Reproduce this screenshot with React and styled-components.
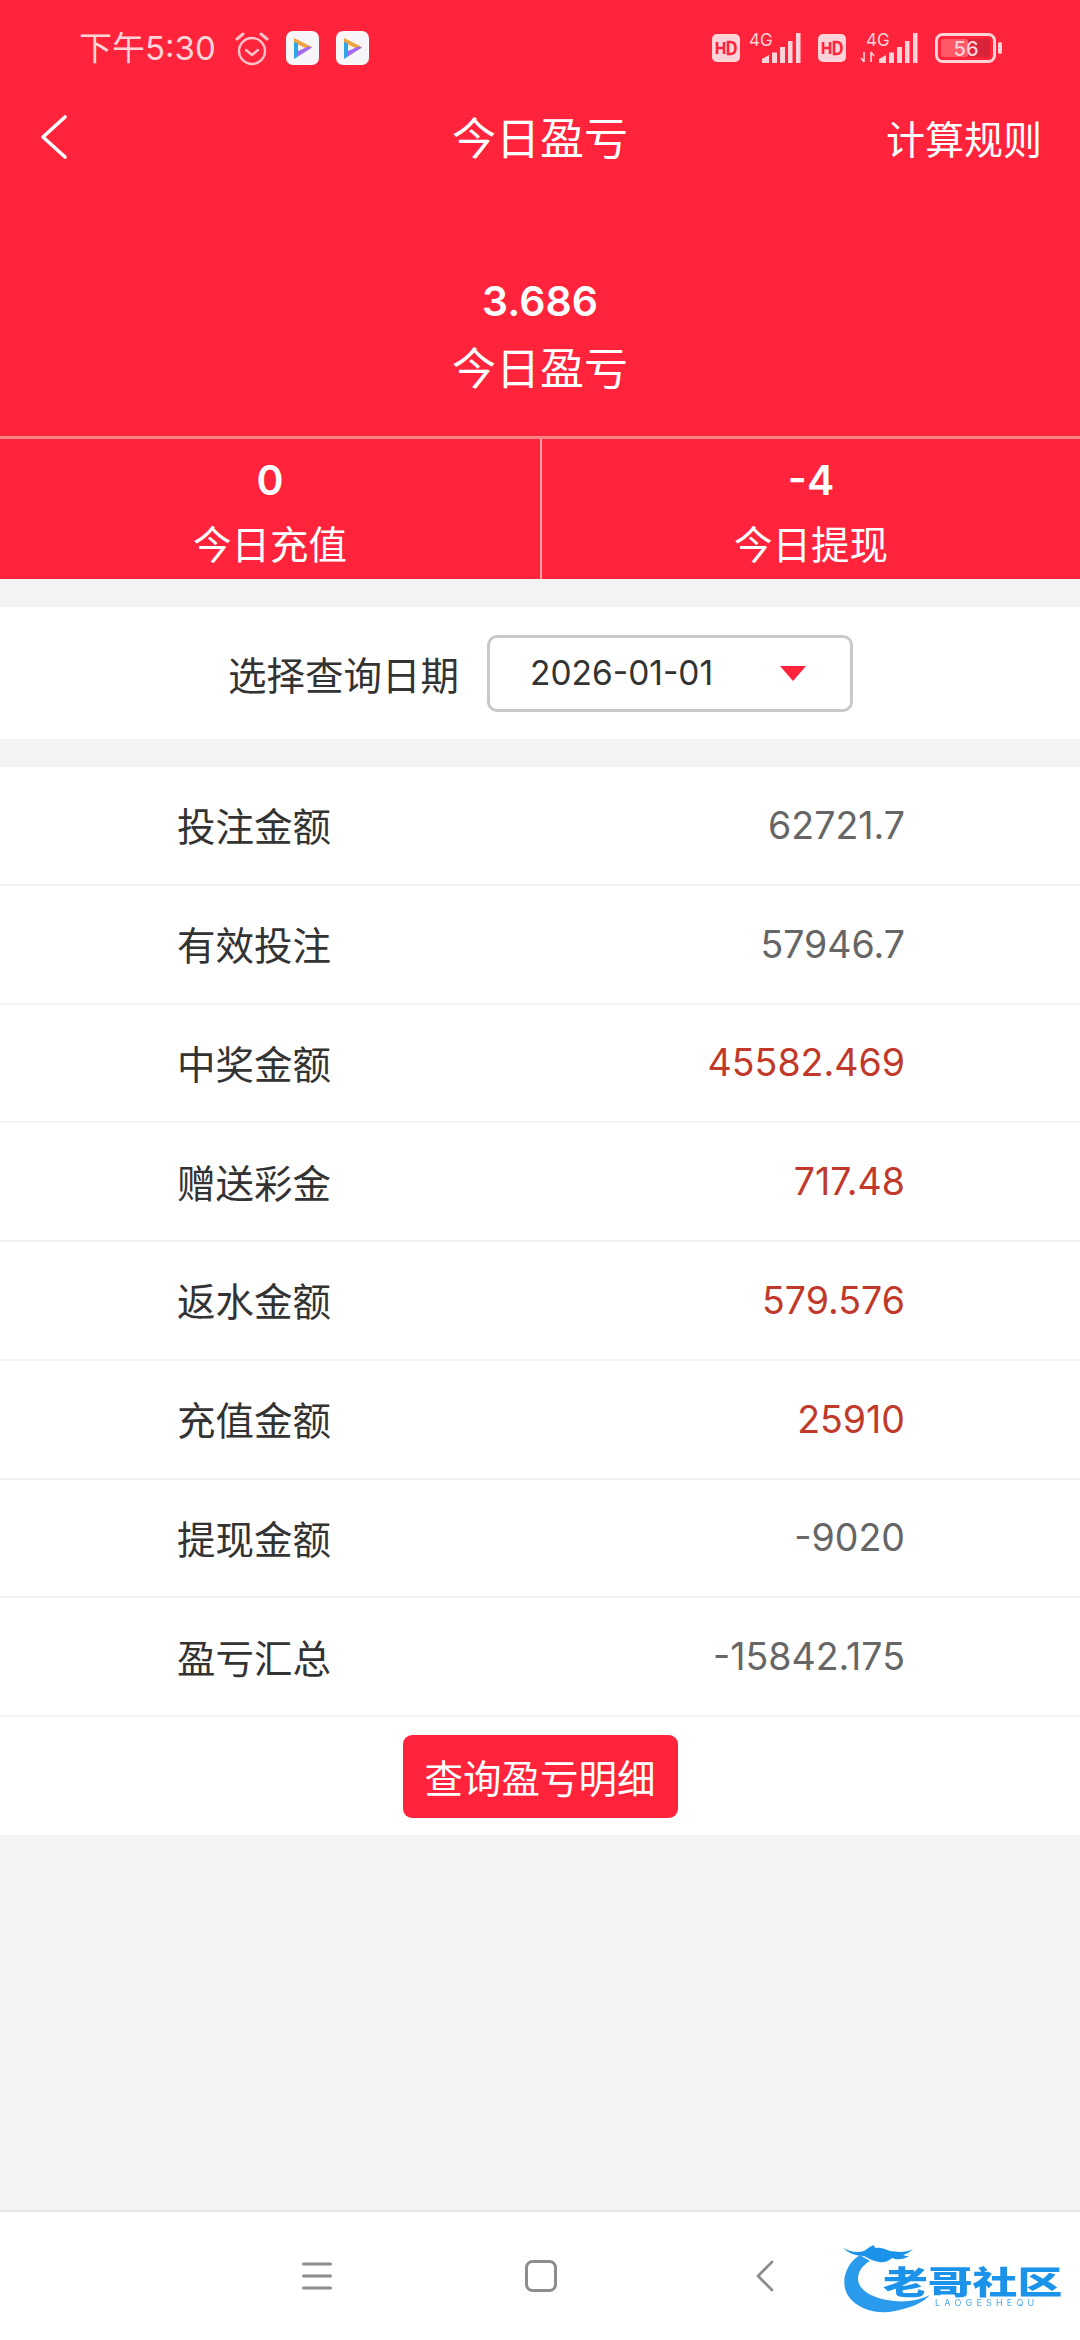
import React from "react";
import styled, { createGlobalStyle } from "styled-components";

const RED = "#ff233b";
const CN = `"Noto Sans CJK SC", "Noto Sans", sans-serif`;
const NUM = `Inter, "Noto Sans CJK SC", sans-serif`;

const Global = createGlobalStyle`
  html, body { margin: 0; padding: 0; background: #f3f3f3; }
  * { box-sizing: border-box; }
  svg { overflow: visible; display: block; }
`;

const Page = styled.div`
  position: relative;
  width: 1080px;
  height: 2340px;
  display: flex;
  flex-direction: column;
  background: #f3f3f3;
  font-family: ${CN};
  overflow: hidden;
`;

const Header = styled.header`
  height: 579px;
  display: flex;
  flex-direction: column;
  background: ${RED};
  color: #fff;
`;

const StatusBar = styled.div`
  height: 90px;
  padding: 6px 77px 0 79px;
  display: flex;
  align-items: center;
  justify-content: space-between;
  color: #ffd3d8;
`;

const StatusGroup = styled.div`
  display: flex;
  align-items: center;
  gap: ${(p) => p.$gap || 0}px;
`;

const Time = styled.span`
  font-family: ${NUM};
  font-size: 33px;
  line-height: 40px;
  margin-right: 2px;
  white-space: nowrap;
`;

const NavBar = styled.div`
  height: 94px;
  padding: 0 38px 0 41px;
  display: flex;
  align-items: center;
  justify-content: space-between;
`;

const Title = styled.h1`
  position: absolute;
  left: 0;
  right: 0;
  margin: 0 0 2px;
  text-align: center;
  font-size: 44px;
  font-weight: 400;
  line-height: 60px;
  pointer-events: none;
`;

const RuleLink = styled.span`
  font-size: 39px;
  line-height: 50px;
  color: #fff;
`;

const Summary = styled.div`
  padding-top: 83px;
  height: 255px;
  border-bottom: 3px solid #ff8488;
  text-align: center;
`;

const BigValue = styled.div`
  font-family: ${NUM};
  font-size: 41px;
  font-weight: 600;
  line-height: 68px;
`;

const BigLabel = styled.div`
  margin-top: -3px;
  font-size: 44px;
  line-height: 68px;
`;

const Split = styled.div`
  flex: 1;
  display: grid;
  grid-template-columns: 1fr 1fr;
`;

const SplitCell = styled.div`
  padding-top: 10px;
  text-align: center;
  & + & { border-left: 2px solid #ffa0a6; }
`;

const CellValue = styled.div`
  font-family: ${NUM};
  font-size: 41px;
  font-weight: 600;
  line-height: 62px;
`;

const CellLabel = styled.div`
  font-size: 38.5px;
  line-height: 62px;
`;

const DateBar = styled.div`
  height: 132px;
  margin-top: 28px;
  padding-left: 228px;
  display: flex;
  align-items: center;
  gap: 28px;
  background: #fff;
`;

const DateLabel = styled.span`
  font-size: 38.5px;
  color: #333;
`;

const Select = styled.div`
  width: 366px;
  height: 77px;
  padding: 0 44px 0 40px;
  display: flex;
  align-items: center;
  justify-content: space-between;
  border: 3px solid #c9c9c9;
  border-radius: 10px;
  font-family: ${NUM};
  font-size: 33.5px;
  color: #333;
`;

const Caret = styled.i`
  width: 0;
  height: 0;
  border-left: 13.5px solid transparent;
  border-right: 13.5px solid transparent;
  border-top: 15px solid ${RED};
`;

const List = styled.div`
  margin-top: 28px;
  background: #fff;
`;

const Row = styled.div`
  height: 118.75px;
  padding: 0 175px 0 177px;
  display: flex;
  align-items: center;
  justify-content: space-between;
  border-bottom: 2px solid #f2f2f2;
`;

const RowLabel = styled.span`
  margin-bottom: 2px;
  font-size: 38.5px;
  color: #333;
`;

const RowValue = styled.span`
  font-family: ${NUM};
  font-size: 37.5px;
  color: ${(p) => (p.$hot ? "#c0392b" : "#666")};
`;

const ButtonRow = styled.div`
  height: 118px;
  display: flex;
  align-items: center;
  justify-content: center;
`;

const QueryButton = styled.button`
  width: 275px;
  height: 83px;
  padding: 0;
  border: 0;
  border-radius: 9px;
  background: ${RED};
  color: #fff;
  font-family: ${CN};
  font-size: 38.5px;
`;

const BottomNav = styled.nav`
  margin-top: auto;
  height: 130px;
  padding-left: 205px;
  display: flex;
  align-items: center;
  background: #fff;
  border-top: 2px solid #e4e4e4;
`;

const NavSlot = styled.div`
  width: 224px;
  display: flex;
  justify-content: center;
`;

const Watermark = styled.div`
  position: absolute;
  left: 842px;
  top: 2245px;
  width: 224px;
  height: 70px;
  filter: blur(0.6px);
`;

const MarkTitle = styled.span`
  position: absolute;
  left: 41px;
  top: 19px;
  font-size: 32px;
  line-height: 32px;
  font-weight: 900;
  color: #1c93ea;
  white-space: nowrap;
  transform: scaleX(1.4);
  transform-origin: left top;
`;

const MarkSub = styled.span`
  position: absolute;
  left: 93px;
  top: 52px;
  font-family: ${NUM};
  font-size: 9px;
  line-height: 11px;
  letter-spacing: 4.2px;
  color: #4aa9ee;
  white-space: nowrap;
`;

const Alarm = () => (
  <svg width="34" height="35" viewBox="0 0 34 35" fill="none" stroke="#ffc2c8" strokeWidth="2.4" strokeLinecap="round" strokeLinejoin="round">
    <circle cx="17" cy="20" r="13" />
    <path d="M11 19l6 5 6-5" />
    <path d="M2 8l6-5M32 8l-6-5" strokeWidth="3" />
  </svg>
);

const AppIcon = () => (
  <svg width="33" height="34" viewBox="0 0 33 34">
    <rect width="33" height="34" rx="7" fill="#f6f6f8" />
    <path d="M8 7l18 9-3.5 2.4L8 11.4z" fill="#f0a33f" />
    <path d="M8 11v17l4-2.4V12.5z" fill="#2fa6e8" />
    <path d="M12 25.6l14-9-3.5-1.2L12 20z" fill="#a46bf0" />
  </svg>
);

const Hd = () => (
  <svg width="28" height="28" viewBox="0 0 28 28">
    <rect width="28" height="28" rx="5" fill="#ffd3d8" />
    <path d="M5 8v12M12 8v12M5 14h7" stroke={RED} strokeWidth="2.6" fill="none" />
    <path d="M16 8v12h2.5c3.2 0 5-2.4 5-6s-1.800-6-5-6z" stroke={RED} strokeWidth="2.6" fill="none" />
  </svg>
);

// bars sit at the right end, the 4G label above them on the left
const Signal = ({ arrows }) => (
  <svg width={arrows ? 59 : 48} height="30" viewBox={arrows ? "0 0 59 30" : "11 0 48 30"}>
    <text x="5" y="13" fontFamily="Inter, sans-serif" fontSize="17" fill="#ffd3d8">4G</text>
    {arrows && <path d="M3 19v10M0 25l3 4M10 19v10M10 19l3 4" stroke="#ffd3d8" strokeWidth="1.600" fill="none" />}
    <path d="M18 30v-4l7-4v8zM28 30V19.500h5V30zM36 30V14h5v16zM44 30V8h4.500v22zM52 30V0h4.500v30z" fill="#ffd3d8" />
  </svg>
);

const Battery = () => (
  <svg width="68" height="30" viewBox="0 0 68 30">
    <rect x="1.500" y="1.500" width="58" height="27" rx="6" fill="none" stroke="#ffd3d8" strokeWidth="3" />
    <rect x="6" y="6" width="49" height="18" rx="2" fill="#d9233a" />
    <rect x="6" y="6" width="27" height="18" rx="2" fill="#ff5a68" />
    <rect x="63" y="9" width="4" height="12" rx="2" fill="#ffd3d8" />
    <text x="31" y="22.500" textAnchor="middle" fontFamily="Inter, sans-serif" fontSize="20" fontWeight="500" fill="#ffd3d8">56</text>
  </svg>
);

const Back = () => (
  <svg width="26" height="44" viewBox="0 0 26 44" fill="none" stroke="#fff" strokeWidth="3.600" strokeLinecap="round" strokeLinejoin="round">
    <path d="M24 2L2 22l22 20" />
  </svg>
);

const MenuKey = () => (
  <svg width="30" height="28" viewBox="0 0 30 28" stroke="#8d8d8d" strokeWidth="3" strokeLinecap="round">
    <path d="M1.500 2h27M1.500 14h27M1.500 26h27" />
  </svg>
);

const HomeKey = () => (
  <svg width="32" height="32" viewBox="0 0 32 32" fill="none" stroke="#8d8d8d" strokeWidth="3">
    <rect x="1.500" y="1.500" width="29" height="29" rx="6" />
  </svg>
);

const BackKey = () => (
  <svg width="18" height="32" viewBox="0 0 18 32" fill="none" stroke="#8d8d8d" strokeWidth="2.800" strokeLinecap="round" strokeLinejoin="round">
    <path d="M16 2L2 16l14 14" />
  </svg>
);

const Dragon = () => (
  <svg width="224" height="70" viewBox="0 0 224 70">
    <path d="M18 10C4 18 -3 38 7 52c9 12 28 18 46 14 15-3 28-8 35-16-12 6-28 8-43 5C28 52 16 44 16 34c0-8 5-14 12-18z" fill="#2a9bec" />
    <path d="M1 3c8 4 14 5 21 3 4-3 7-5 10-6 0 2 1 3 3 3 5-1 9 2 13 3 8 1 15 2 23-2-3 3-6 5-10 6 2 1 4 1 6 1-6 4-12 4-17 2-3 3-8 5-13 4-6-1-10-3-15-6-8 0-16-3-21-8z" fill="#1c93ea" />
  </svg>
);

const rows = [
  { label: "投注金额", value: "62721.7" },
  { label: "有效投注", value: "57946.7" },
  { label: "中奖金额", value: "45582.469", hot: true },
  { label: "赠送彩金", value: "717.48", hot: true },
  { label: "返水金额", value: "579.576", hot: true },
  { label: "充值金额", value: "25910", hot: true },
  { label: "提现金额", value: "-9020" },
  { label: "盈亏汇总", value: "-15842.175" },
];

export default function App() {
  return (
    <Page>
      <Global />
      <Header>
        <StatusBar>
          <StatusGroup $gap={17}>
            <Time>下午5:30</Time>
            <Alarm />
            <AppIcon />
            <AppIcon />
          </StatusGroup>
          <StatusGroup $gap={15}>
            <Hd />
            <Signal />
            <Hd />
            <Signal arrows />
            <Battery />
          </StatusGroup>
        </StatusBar>
        <NavBar>
          <Back />
          <Title>今日盈亏</Title>
          <RuleLink>计算规则</RuleLink>
        </NavBar>
        <Summary>
          <BigValue>3.686</BigValue>
          <BigLabel>今日盈亏</BigLabel>
        </Summary>
        <Split>
          <SplitCell>
            <CellValue>0</CellValue>
            <CellLabel>今日充值</CellLabel>
          </SplitCell>
          <SplitCell>
            <CellValue>-4</CellValue>
            <CellLabel>今日提现</CellLabel>
          </SplitCell>
        </Split>
      </Header>
      <DateBar>
        <DateLabel>选择查询日期</DateLabel>
        <Select>
          2026-01-01
          <Caret />
        </Select>
      </DateBar>
      <List>
        {rows.map((r) => (
          <Row key={r.label}>
            <RowLabel>{r.label}</RowLabel>
            <RowValue $hot={r.hot}>{r.value}</RowValue>
          </Row>
        ))}
        <ButtonRow>
          <QueryButton>查询盈亏明细</QueryButton>
        </ButtonRow>
      </List>
      <BottomNav>
        <NavSlot><MenuKey /></NavSlot>
        <NavSlot><HomeKey /></NavSlot>
        <NavSlot><BackKey /></NavSlot>
      </BottomNav>
      <Watermark>
        <Dragon />
        <MarkTitle>老哥社区</MarkTitle>
        <MarkSub>LAOGESHEQU</MarkSub>
      </Watermark>
    </Page>
  );
}
